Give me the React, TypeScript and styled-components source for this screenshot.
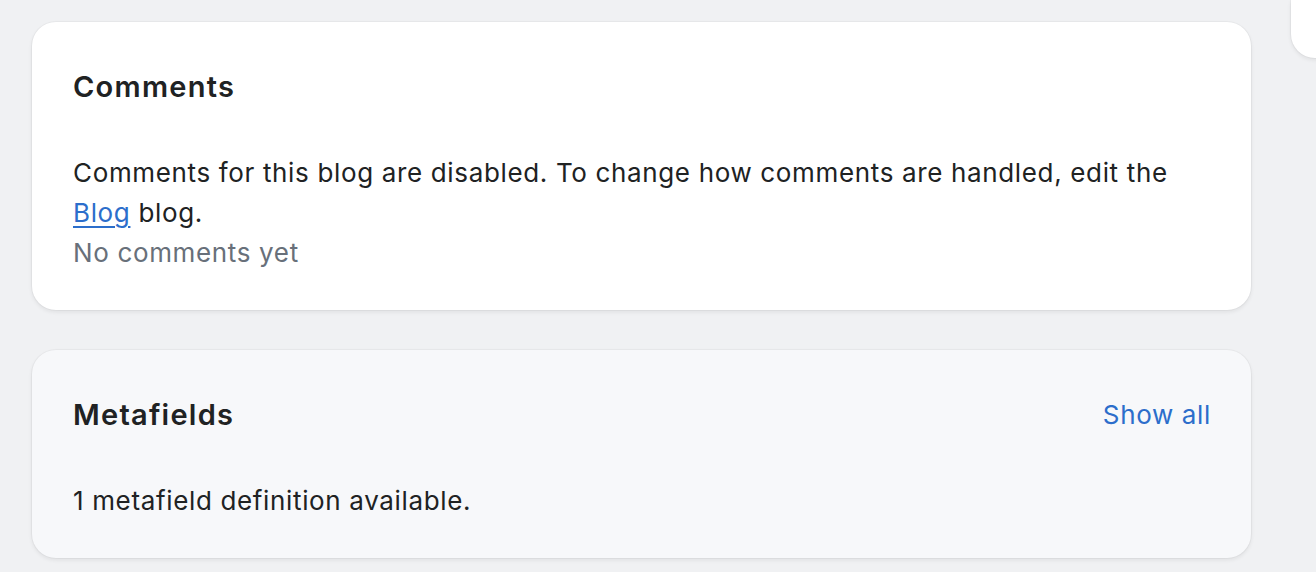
import React from "react";
import styled, { createGlobalStyle } from "styled-components";

const Global = createGlobalStyle`
  html, body { margin: 0; padding: 0; }
  body {
    background: #f0f1f3;
    font-family: Inter, "Noto Sans", sans-serif;
    -webkit-font-smoothing: antialiased;
  }
`;

const Page = styled.div`
  display: flex;
  align-items: flex-start;
  gap: 40px;
  width: 1316px;
  height: 572px;
  overflow: hidden;
  box-sizing: border-box;
`;

const Column = styled.div`
  display: flex;
  flex-direction: column;
  gap: 40px;
  width: 1219px;
  flex: none;
  padding: 22px 0 0 32px;
`;

const Side = styled.div`
  flex: none;
  width: 120px;
  height: 58px;
  background: #fff;
  border-radius: 0 0 0 24px;
  box-shadow: 0 2px 4px rgba(26, 26, 26, 0.08), 0 0 0 1px rgba(0, 0, 0, 0.03);
`;

const Card = styled.section<{ $tint?: boolean }>`
  background: ${(p) => (p.$tint ? "#f7f8fa" : "#ffffff")};
  border-radius: 24px;
  padding: 42px 40px 37px 41px;
  box-shadow: 0 2px 4px rgba(26, 26, 26, 0.08), 0 0 0 1px rgba(0, 0, 0, 0.03);
  display: flex;
  flex-direction: column;
  gap: 43px;
  color: #202223;
`;

const Header = styled.div`
  display: flex;
  align-items: center;
  justify-content: space-between;
  height: 46px;
`;

const Title = styled.h2`
  margin: 0;
  font-size: 29px;
  line-height: 46px;
  font-weight: 600;
  letter-spacing: 1.25px;
`;

const Body = styled.div`
  font-size: 26px;
  line-height: 40px;
  letter-spacing: 0.65px;
`;

const Para = styled.p`
  margin: 0;
`;

const Muted = styled.p`
  margin: 0;
  color: #68707a;
`;

const Link = styled.a`
  color: #2c6ecb;
  text-decoration: underline;
  text-underline-offset: 4px;
  text-decoration-thickness: 2px;
`;

const Action = styled.button`
  border: none;
  background: none;
  padding: 0;
  font: inherit;
  font-size: 26px;
  letter-spacing: 0.65px;
  line-height: 40px;
  color: #2c6ecb;
  cursor: pointer;
`;

export default function App() {
  return (
    <>
      <Global />
      <Page>
        <Column>
          <Card>
            <Header>
              <Title>Comments</Title>
            </Header>
            <Body>
              <Para>
                Comments for this blog are disabled. To change how comments are handled, edit the{" "}
                <Link href="#">Blog</Link> blog.
              </Para>
              <Muted>No comments yet</Muted>
            </Body>
          </Card>
          <Card $tint>
            <Header>
              <Title>Metafields</Title>
              <Action>Show all</Action>
            </Header>
            <Body>
              <Para>1 metafield definition available.</Para>
            </Body>
          </Card>
        </Column>
        <Side />
      </Page>
    </>
  );
}
